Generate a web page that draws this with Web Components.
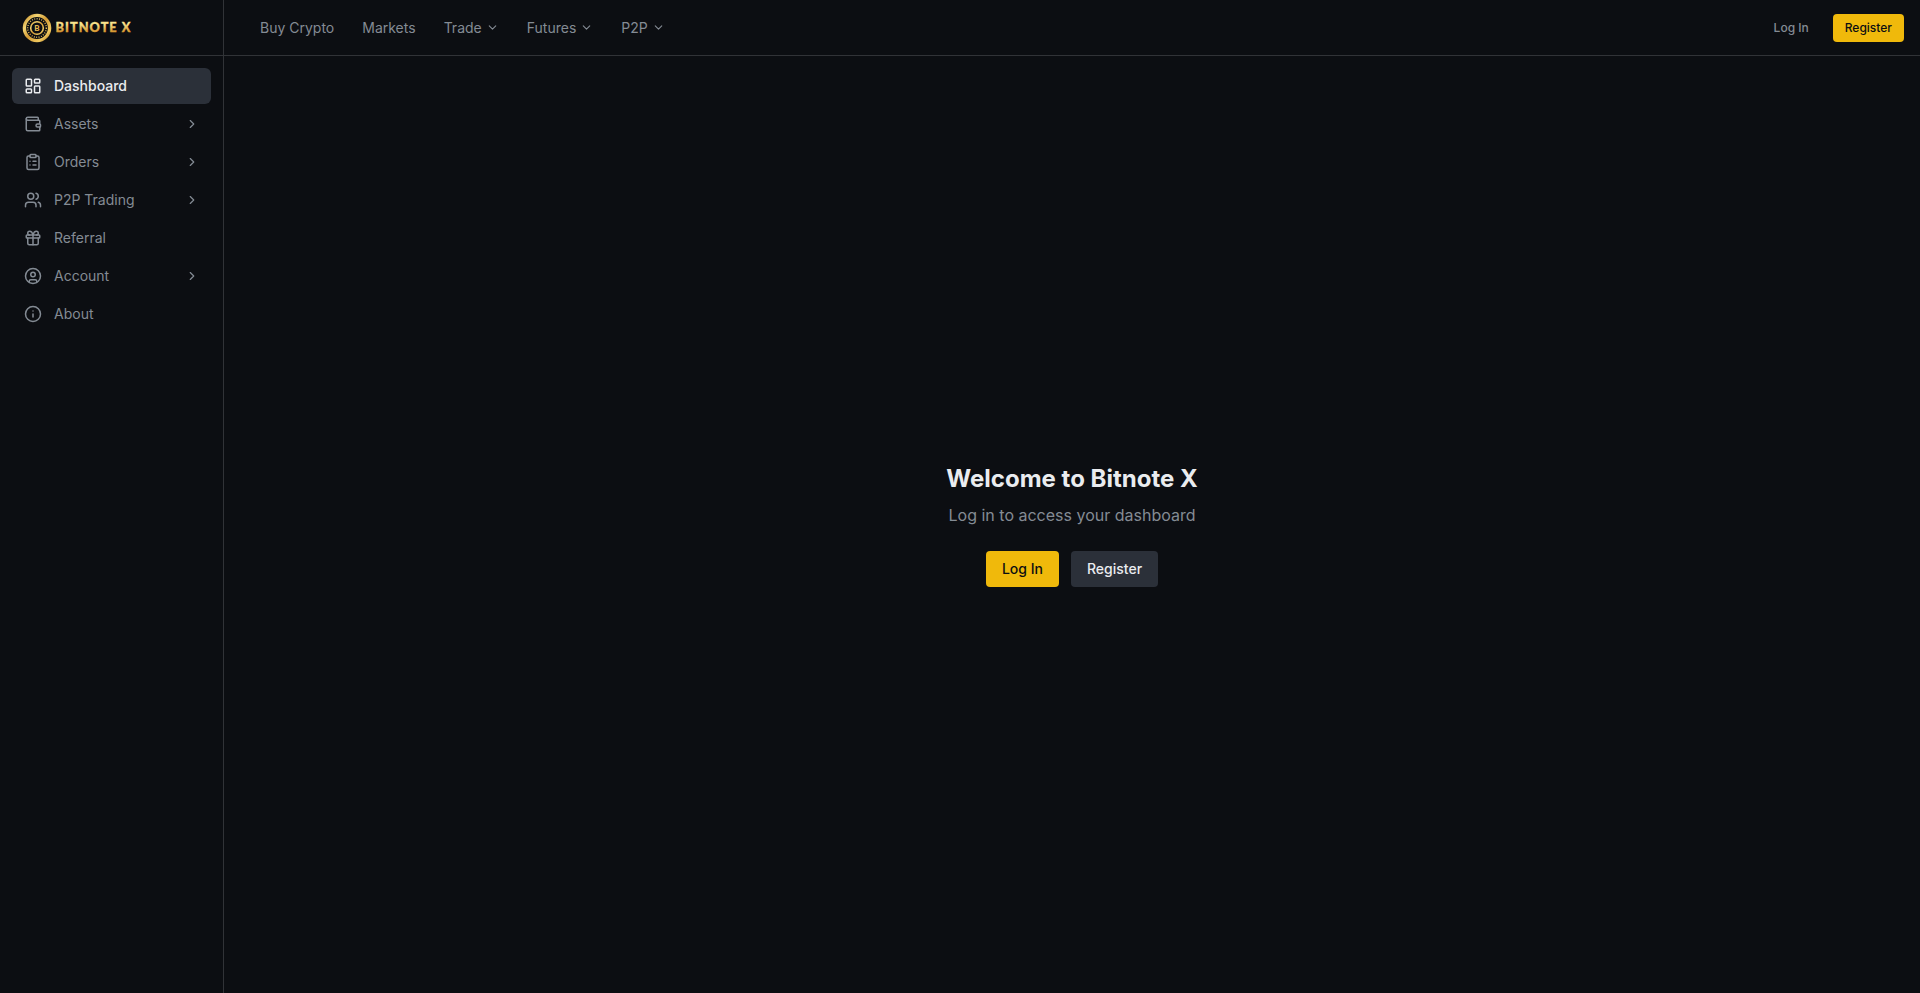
<!DOCTYPE html>
<html lang="en">
<head>
    <meta charset="UTF-8">
    <meta name="viewport" content="width=device-width, initial-scale=1.0">
    <title>Bitnote X</title>
    <style>
        :root {
            --background: #0c0e12;
            --border: #313337;
            --surface: #2b3039;
            --text: #eaecef;
            --muted: #848b94;
            --primary: #f0b90b;
            --on-primary: #0c0e12;
        }

        body {
            background: var(--background);
            color: var(--text);
            font-family: Inter, "Liberation Sans", sans-serif;
            font-size: 14px;
            line-height: 20px;
            margin: 0;
        }
    </style>
</head>
<body>
    <app-shell>
        <brand-logo slot="brand"></brand-logo>

        <side-item slot="side" icon="dashboard" active>Dashboard</side-item>
        <side-item slot="side" icon="wallet" expandable>Assets</side-item>
        <side-item slot="side" icon="clipboard" expandable>Orders</side-item>
        <side-item slot="side" icon="users" expandable>P2P Trading</side-item>
        <side-item slot="side" icon="gift">Referral</side-item>
        <side-item slot="side" icon="account" expandable>Account</side-item>
        <side-item slot="side" icon="info">About</side-item>

        <nav-item slot="nav">Buy Crypto</nav-item>
        <nav-item slot="nav">Markets</nav-item>
        <nav-item slot="nav" menu>Trade</nav-item>
        <nav-item slot="nav" menu>Futures</nav-item>
        <nav-item slot="nav" menu>P2P</nav-item>

        <app-button slot="actions" kind="ghost" size="small">Log In</app-button>
        <app-button slot="actions" kind="primary" size="small">Register</app-button>

        <welcome-panel>
            <span slot="title">Welcome to Bitnote X</span>
            <span slot="subtitle">Log in to access your dashboard</span>
            <app-button slot="actions" kind="primary">Log In</app-button>
            <app-button slot="actions" kind="secondary">Register</app-button>
        </welcome-panel>
    </app-shell>

    <script>
        const ICONS = {
            dashboard: `
                <rect width="7" height="9" x="3" y="3" rx="1"/>
                <rect width="7" height="5" x="14" y="3" rx="1"/>
                <rect width="7" height="9" x="14" y="12" rx="1"/>
                <rect width="7" height="5" x="3" y="16" rx="1"/>`,
            wallet: `
                <path d="M19 7V4a1 1 0 0 0-1-1H5a2 2 0 0 0 0 4h15a1 1 0 0 1 1 1v4h-3a2 2 0 0 0 0 4h3a1 1 0 0 0 1-1v-2a1 1 0 0 0-1-1"/>
                <path d="M3 5v14a2 2 0 0 0 2 2h15a1 1 0 0 0 1-1v-4"/>`,
            clipboard: `
                <rect width="8" height="4" x="8" y="2" rx="1"/>
                <path d="M16 4h2a2 2 0 0 1 2 2v14a2 2 0 0 1-2 2H6a2 2 0 0 1-2-2V6a2 2 0 0 1 2-2h2"/>
                <path d="M12 11h4"/><path d="M12 16h4"/><path d="M8 11h.01"/><path d="M8 16h.01"/>`,
            users: `
                <path d="M16 21v-2a4 4 0 0 0-4-4H6a4 4 0 0 0-4 4v2"/>
                <circle cx="9" cy="7" r="4"/>
                <path d="M22 21v-2a4 4 0 0 0-3-3.87"/>
                <path d="M16 3.13a4 4 0 0 1 0 7.75"/>`,
            gift: `
                <rect x="3" y="8" width="18" height="4" rx="1"/>
                <path d="M12 8v13"/>
                <path d="M19 12v7a2 2 0 0 1-2 2H7a2 2 0 0 1-2-2v-7"/>
                <path d="M7.5 8a2.5 2.5 0 0 1 0-5A4.8 8 0 0 1 12 8a4.8 8 0 0 1 4.5-5 2.5 2.5 0 0 1 0 5"/>`,
            account: `
                <circle cx="12" cy="12" r="10"/>
                <circle cx="12" cy="10" r="3"/>
                <path d="M7 20.662V19a2 2 0 0 1 2-2h6a2 2 0 0 1 2 2v1.662"/>`,
            info: `
                <circle cx="12" cy="12" r="10"/>
                <path d="M12 16v-4"/><path d="M12 8h.01"/>`,
            right: `<path d="m9 18 6-6-6-6"/>`,
            down: `<path d="m6 9 6 6 6-6"/>`
        };

        const icon = (name, size) => `
            <svg width="${size}" height="${size}" viewBox="0 0 24 24" fill="none" stroke="currentColor"
                stroke-width="2" stroke-linecap="round" stroke-linejoin="round">${ICONS[name]}</svg>`;

        class AppShell extends HTMLElement {
            constructor() {
                super();
                this.attachShadow({mode: 'open'});
            }

            connectedCallback() {
                this.shadowRoot.innerHTML = `
                    <style>
                        :host {
                            display: grid;
                            grid-template-columns: 224px 1fr;
                            grid-template-rows: 56px 1fr;
                            height: 100vh;
                        }

                        .brand, aside { border-right: 1px solid var(--border); }
                        .brand, header { border-bottom: 1px solid var(--border); }

                        .brand {
                            align-items: center;
                            display: flex;
                            padding-left: 22px;
                        }

                        header {
                            align-items: center;
                            display: flex;
                            justify-content: space-between;
                            padding: 0 16px 0 24px;
                        }

                        nav { display: flex; gap: 4px; }
                        .actions { display: flex; gap: 12px; }

                        aside {
                            display: flex;
                            flex-direction: column;
                            gap: 2px;
                            padding: 12px;
                        }

                        main { display: grid; place-items: center; }
                    </style>
                    <div class="brand"><slot name="brand"></slot></div>
                    <header>
                        <nav><slot name="nav"></slot></nav>
                        <div class="actions"><slot name="actions"></slot></div>
                    </header>
                    <aside><slot name="side"></slot></aside>
                    <main><slot></slot></main>
                `;
            }
        }

        class BrandLogo extends HTMLElement {
            constructor() {
                super();
                this.attachShadow({mode: 'open'});
            }

            connectedCallback() {
                this.shadowRoot.innerHTML = `
                    <style>
                        :host { display: block; }
                        svg { display: block; }
                        text { font-family: Lato, sans-serif; font-weight: 900; }
                    </style>
                    <svg width="112" height="30" viewBox="0 0 112 30">
                        <defs>
                            <linearGradient id="ring" x1="0" y1="0" x2="1" y2="1">
                                <stop offset="0" stop-color="#c48a26"/>
                                <stop offset=".25" stop-color="#f3d473"/>
                                <stop offset=".5" stop-color="#d39a34"/>
                                <stop offset=".8" stop-color="#f0c960"/>
                                <stop offset="1" stop-color="#b1761d"/>
                            </linearGradient>
                            <linearGradient id="word" x1="0" y1="0" x2="0" y2="1">
                                <stop offset=".25" stop-color="#f8e48c"/>
                                <stop offset=".8" stop-color="#d49229"/>
                            </linearGradient>
                        </defs>
                        <g fill="none" stroke="url(#ring)">
                            <circle cx="15" cy="15" r="12.6" stroke-width="3.4"/>
                            <circle cx="15" cy="15" r="9.3" stroke-width="1.5" stroke-dasharray=".9 1.5"/>
                            <circle cx="15" cy="15" r="6.3" stroke-width="1.6"/>
                            <path d="M4 15h4.5M21.5 15H26" stroke-width="1"/>
                        </g>
                        <text x="15" y="17.9" font-size="8" text-anchor="middle" fill="#e6b850">B</text>
                        <text x="33.5" y="19.3" font-size="12.3" textLength="76" lengthAdjust="spacingAndGlyphs"
                            letter-spacing="1" fill="url(#word)" stroke="url(#word)" stroke-width=".3">BITNOTE X</text>
                    </svg>
                `;
            }
        }

        class SideItem extends HTMLElement {
            constructor() {
                super();
                this.attachShadow({mode: 'open'});
            }

            connectedCallback() {
                this.shadowRoot.innerHTML = `
                    <style>
                        :host {
                            align-items: center;
                            border-radius: 6px;
                            box-sizing: border-box;
                            color: var(--muted);
                            cursor: pointer;
                            display: flex;
                            gap: 12px;
                            height: 36px;
                            padding: 0 12px;
                        }

                        :host([active]) {
                            background: var(--surface);
                            color: var(--text);
                            font-weight: 500;
                        }

                        span { flex: 1; }
                    </style>
                    ${icon(this.getAttribute('icon'), 18)}
                    <span><slot></slot></span>
                    ${this.hasAttribute('expandable') ? icon('right', 14) : ''}
                `;
            }
        }

        class NavItem extends HTMLElement {
            constructor() {
                super();
                this.attachShadow({mode: 'open'});
            }

            connectedCallback() {
                this.shadowRoot.innerHTML = `
                    <style>
                        :host {
                            align-items: center;
                            color: var(--muted);
                            cursor: pointer;
                            display: flex;
                            gap: 4px;
                            padding: 0 12px;
                        }
                    </style>
                    <slot></slot>
                    ${this.hasAttribute('menu') ? icon('down', 13) : ''}
                `;
            }
        }

        class AppButton extends HTMLElement {
            constructor() {
                super();
                this.attachShadow({mode: 'open'});
            }

            connectedCallback() {
                this.shadowRoot.innerHTML = `
                    <style>
                        :host { display: block; }

                        button {
                            border: 0;
                            border-radius: 4px;
                            cursor: pointer;
                            display: block;
                            font: inherit;
                            font-weight: 500;
                            padding: 8px 16px;
                        }

                        :host([size="small"]) button {
                            font-size: 12px;
                            line-height: 16px;
                            padding: 6px 12px;
                        }

                        :host([kind="primary"]) button { background: var(--primary); color: var(--on-primary); }
                        :host([kind="secondary"]) button { background: var(--surface); color: var(--text); }
                        :host([kind="ghost"]) button { background: none; color: var(--muted); }
                    </style>
                    <button type="button"><slot></slot></button>
                `;
            }
        }

        class WelcomePanel extends HTMLElement {
            constructor() {
                super();
                this.attachShadow({mode: 'open'});
            }

            connectedCallback() {
                this.shadowRoot.innerHTML = `
                    <style>
                        :host { display: block; text-align: center; }

                        h1 {
                            font-size: 24px;
                            font-weight: 700;
                            line-height: 32px;
                            margin: 0 0 8px;
                        }

                        p {
                            color: var(--muted);
                            font-size: 16px;
                            line-height: 24px;
                            margin: 0 0 24px;
                        }

                        .actions {
                            display: flex;
                            gap: 12px;
                            justify-content: center;
                        }
                    </style>
                    <h1><slot name="title"></slot></h1>
                    <p><slot name="subtitle"></slot></p>
                    <div class="actions"><slot name="actions"></slot></div>
                `;
            }
        }

        customElements.define('app-shell', AppShell);
        customElements.define('brand-logo', BrandLogo);
        customElements.define('side-item', SideItem);
        customElements.define('nav-item', NavItem);
        customElements.define('app-button', AppButton);
        customElements.define('welcome-panel', WelcomePanel);
    </script>
</body>
</html>
